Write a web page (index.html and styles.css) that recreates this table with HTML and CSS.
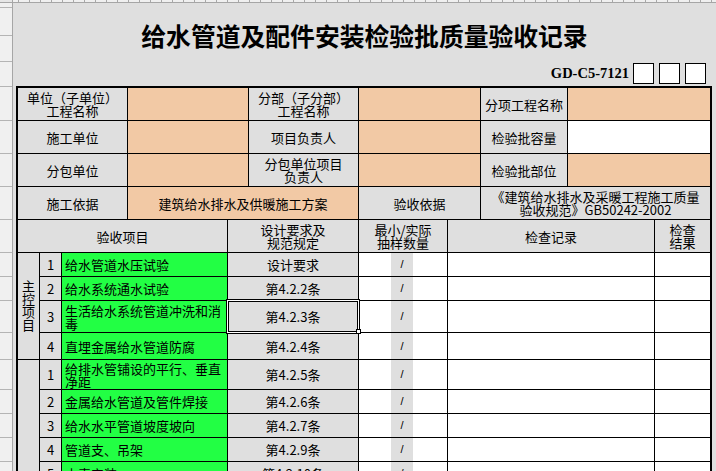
FILE: index.html
```html
<!DOCTYPE html>
<html lang="zh-CN">
<head>
<meta charset="utf-8">
<title>给水管道及配件安装检验批质量验收记录</title>
<link rel="stylesheet" href="styles.css">
</head>
<body>
<div class="app">
  <div class="corner"></div>
  <div class="colhdr"></div>
  <div class="rowhdr">
    <div></div><div></div><div></div><div></div><div></div><div></div>
    <div></div><div></div><div></div><div></div><div></div><div></div>
    <div></div><div></div><div></div><div></div><div></div><div></div>
  </div>
  <div class="sheet">
    <h1 class="title">给水管道及配件安装检验批质量验收记录</h1>
    <div class="coderow">
      <span class="code">GD-C5-7121</span>
      <span class="box"></span><span class="box"></span><span class="box"></span>
    </div>
    <div class="form">
      <div class="top">
        <div class="c">单位（子单位）<br>工程名称</div>
        <div class="c peach"></div>
        <div class="c">分部（子分部）<br>工程名称</div>
        <div class="c peach"></div>
        <div class="c">分项工程名称</div>
        <div class="c peach"></div>

        <div class="c">施工单位</div>
        <div class="c peach"></div>
        <div class="c">项目负责人</div>
        <div class="c peach"></div>
        <div class="c">检验批容量</div>
        <div class="c white"></div>

        <div class="c">分包单位</div>
        <div class="c peach"></div>
        <div class="c">分包单位项目<br>负责人</div>
        <div class="c peach"></div>
        <div class="c">检验批部位</div>
        <div class="c peach"></div>

        <div class="c">施工依据</div>
        <div class="c peach s2">建筑给水排水及供暖施工方案</div>
        <div class="c">验收依据</div>
        <div class="c s2">《建筑给水排水及采暖工程施工质量<br>验收规范》GB50242-2002</div>
      </div>

      <div class="items">
        <div class="c hd s3">验收项目</div>
        <div class="c hd">设计要求及<br>规范规定</div>
        <div class="c hd">最小/实际<br>抽样数量</div>
        <div class="c hd">检查记录</div>
        <div class="c hd">检查<br>结果</div>

        <div class="c grp main">主控项目</div>
        <div class="c">1</div>
        <div class="c green">给水管道水压试验</div>
        <div class="c">设计要求</div>
        <div class="c smp"><span class="sl">/</span></div>
        <div class="c white"></div>
        <div class="c white"></div>

        <div class="c">2</div>
        <div class="c green">给水系统通水试验</div>
        <div class="c">第4.2.2条</div>
        <div class="c smp"><span class="sl">/</span></div>
        <div class="c white"></div>
        <div class="c white"></div>

        <div class="c">3</div>
        <div class="c green">生活给水系统管道冲洗和消毒</div>
        <div class="c sel">第4.2.3条</div>
        <div class="c smp"><span class="sl">/</span></div>
        <div class="c white"></div>
        <div class="c white"></div>

        <div class="c">4</div>
        <div class="c green">直埋金属给水管道防腐</div>
        <div class="c">第4.2.4条</div>
        <div class="c smp"><span class="sl">/</span></div>
        <div class="c white"></div>
        <div class="c white"></div>

        <div class="c grp gen"></div>
        <div class="c">1</div>
        <div class="c green">给排水管铺设的平行、垂直净距</div>
        <div class="c">第4.2.5条</div>
        <div class="c smp"><span class="sl">/</span></div>
        <div class="c white"></div>
        <div class="c white"></div>

        <div class="c">2</div>
        <div class="c green">金属给水管道及管件焊接</div>
        <div class="c">第4.2.6条</div>
        <div class="c smp"><span class="sl">/</span></div>
        <div class="c white"></div>
        <div class="c white"></div>

        <div class="c">3</div>
        <div class="c green">给水水平管道坡度坡向</div>
        <div class="c">第4.2.7条</div>
        <div class="c smp"><span class="sl">/</span></div>
        <div class="c white"></div>
        <div class="c white"></div>

        <div class="c">4</div>
        <div class="c green">管道支、吊架</div>
        <div class="c">第4.2.9条</div>
        <div class="c smp"><span class="sl">/</span></div>
        <div class="c white"></div>
        <div class="c white"></div>

        <div class="c">5</div>
        <div class="c green">水表安装</div>
        <div class="c">第4.2.10条</div>
        <div class="c smp"><span class="sl">/</span></div>
        <div class="c white"></div>
        <div class="c white"></div>
      </div>
    </div>
  </div>
</div>
</body>
</html>
```

FILE: styles.css
```css
:root {
  --gray: #dfdfdf;
  --peach: #f2c9a5;
  --green: #22ff44;
  --hdr: #f0f0f0;
  --hdrline: #a6a6a6;
}

html, body {
  margin: 0;
  padding: 0;
}

body {
  width: 716px;
  height: 471px;
  overflow: hidden;
  background: var(--gray);
  font-family: "Noto Sans CJK SC", "Noto Sans", sans-serif;
  color: #000;
  text-spacing-trim: space-all;
}

.app {
  display: grid;
  grid-template-columns: 13px 703px;
  grid-template-rows: 3px 468px;
  height: 471px;
}

.corner {
  background: #e6e6e6;
  border-right: 1px solid var(--hdrline);
  border-bottom: 1px solid var(--hdrline);
  box-sizing: border-box;
}

.colhdr {
  box-sizing: border-box;
  border-bottom: 1px solid var(--hdrline);
  background-color: var(--hdr);
  background-image: repeating-linear-gradient(90deg, #a8a8a8 0 1px, transparent 1px 11px);
  background-position: 5px 0;
}

.rowhdr {
  box-sizing: border-box;
  border-right: 1px solid var(--hdrline);
  background: var(--hdr);
  display: grid;
  grid-template-rows: 5px 28px 26px 25px 34px 33px 33px 33px 33px 24px 24px 32px 27px 30px 24px 24px 24px 24px;
  overflow: hidden;
}

.rowhdr > div {
  box-sizing: border-box;
  border-bottom: 1px solid #b4b4b4;
}

.sheet {
  background: var(--gray);
  overflow: hidden;
}

.title {
  margin: 0;
  box-sizing: border-box;
  height: 58px;
  padding-top: 5px;
  display: flex;
  align-items: center;
  justify-content: center;
  font-size: 24.8px;
  font-weight: 700;
  line-height: 30px;
  letter-spacing: 0;
}

.coderow {
  box-sizing: border-box;
  height: 25px;
  padding: 2px 10px 0 0;
  display: flex;
  justify-content: flex-end;
  align-items: flex-start;
  gap: 5px;
}

.code {
  height: 21px;
  line-height: 21px;
  font-family: "Liberation Serif", serif;
  font-weight: 700;
  font-size: 14.5px;
  margin-right: -1px;
}

.box {
  box-sizing: border-box;
  width: 21px;
  height: 21px;
  border: 1px solid #000;
  background: #fff;
}

.form {
  margin-left: 3px;
  width: 696px;
  box-sizing: border-box;
  border: 2px solid #000;
  border-bottom: 0;
  background: #000;
  display: flex;
  flex-direction: column;
  gap: 1px;
}

.top {
  display: grid;
  grid-template-columns: 109px 120px 109px 121px 86px 142px;
  grid-template-rows: repeat(4, 32px);
  gap: 1px;
}

.items {
  display: grid;
  grid-template-columns: 21px 21px 165px 130px 88px 206px 55px;
  grid-template-rows: 32px 23px 23px 31px 26px 29px 23px 23px 23px 23px;
  gap: 1px;
}

.c {
  background: var(--gray);
  display: flex;
  align-items: center;
  justify-content: center;
  text-align: center;
  font-size: 13px;
  line-height: 13px;
  overflow: hidden;
}

.peach { background: var(--peach); }
.white { background: #fff; }

.items .green {
  background: var(--green);
  justify-content: flex-start;
  text-align: left;
  padding-left: 3px;
}

.s2 { grid-column: span 2; }
.s3 { grid-column: span 3; }

.grp {
  writing-mode: vertical-rl;
  text-orientation: upright;
  letter-spacing: 0;
}

.main { grid-row: span 4; }
.gen { grid-row: span 5; }

.smp {
  background: #fff;
  justify-content: flex-start;
  align-items: stretch;
}

.sl {
  margin-left: 32px;
  width: 22px;
  background: var(--gray);
  display: flex;
  align-items: center;
  justify-content: center;
  font-family: "Liberation Sans", sans-serif;
  font-size: 11px;
}

.sel {
  position: relative;
  overflow: visible;
}

.sel::after {
  content: "";
  position: absolute;
  top: -2px;
  left: -2px;
  right: -2px;
  bottom: -2px;
  border: 1px solid #000;
  box-shadow: inset 0 0 0 1px #fff, inset 0 0 0 2px #000;
}

.sel::before {
  content: "";
  position: absolute;
  right: -3px;
  bottom: -2px;
  width: 3px;
  height: 3px;
  border: 1px solid #000;
  background: #fff;
  z-index: 1;
}
```
